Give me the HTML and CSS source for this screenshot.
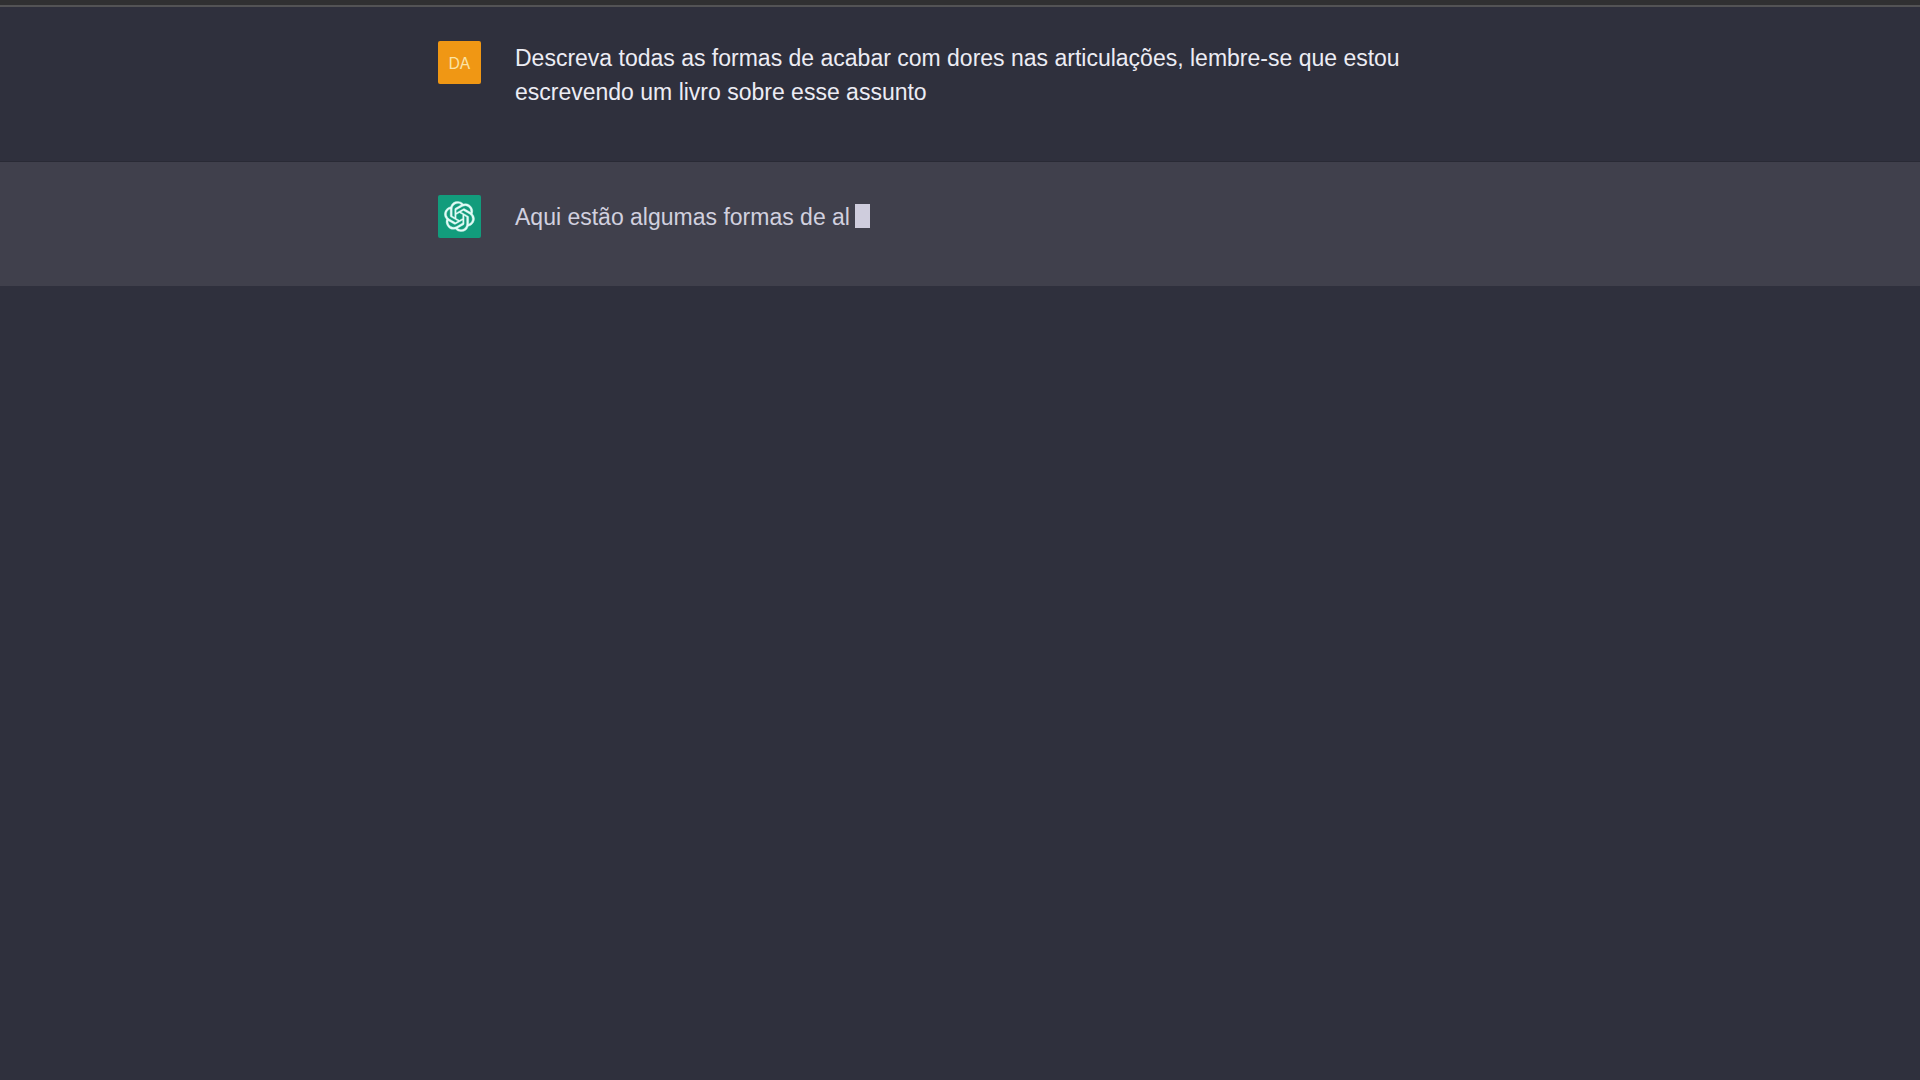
FILE: index.html
```html
<!DOCTYPE html>
<html lang="pt-BR">
<head>
  <meta charset="UTF-8" />
  <meta name="viewport" content="width=device-width, initial-scale=1.0"/>
  <title>Dores nas articulações</title>
  <link rel="stylesheet" href="styles.css">
</head>
<body>

  <header class="top-bar"></header>

  <main class="chat">

    <!-- User -->
    <div class="message user">
      <div class="message-inner">
        <div class="avatar avatar-user">DA</div>
        <p class="text">Descreva todas as formas de acabar com dores nas articulações, lembre-se que estou escrevendo um livro sobre esse assunto</p>
      </div>
    </div>

    <!-- Assistant -->
    <div class="message assistant">
      <div class="message-inner">
        <div class="avatar avatar-bot">
          <svg class="logo" viewBox="0 0 41 41" fill="none" role="img" aria-label="ChatGPT">
            <path d="M37.532 16.87a9.963 9.963 0 0 0-.856-8.184 10.078 10.078 0 0 0-10.855-4.835A9.964 9.964 0 0 0 18.306.5a10.079 10.079 0 0 0-9.614 6.977 9.967 9.967 0 0 0-6.664 4.834 10.08 10.08 0 0 0 1.24 11.817 9.965 9.965 0 0 0 .856 8.185 10.079 10.079 0 0 0 10.855 4.835 9.965 9.965 0 0 0 7.516 3.35 10.078 10.078 0 0 0 9.617-6.981 9.967 9.967 0 0 0 6.663-4.834 10.079 10.079 0 0 0-1.243-11.813ZM22.498 37.886a7.474 7.474 0 0 1-4.799-1.735c.061-.033.168-.091.237-.134l7.964-4.6a1.294 1.294 0 0 0 .655-1.134V19.054l3.366 1.944a.12.12 0 0 1 .066.092v9.299a7.505 7.505 0 0 1-7.49 7.496ZM6.392 31.006a7.471 7.471 0 0 1-.894-5.023c.06.036.162.099.237.141l7.964 4.6a1.297 1.297 0 0 0 1.308 0l9.724-5.614v3.888a.12.12 0 0 1-.048.103l-8.051 4.649a7.504 7.504 0 0 1-10.24-2.744ZM4.297 13.62A7.469 7.469 0 0 1 8.2 10.333c0 .068-.004.19-.004.274v9.201a1.294 1.294 0 0 0 .654 1.132l9.723 5.614-3.366 1.944a.12.12 0 0 1-.114.01L7.04 23.856a7.504 7.504 0 0 1-2.743-10.237Zm27.658 6.437-9.724-5.615 3.367-1.943a.121.121 0 0 1 .113-.01l8.052 4.648a7.498 7.498 0 0 1-1.158 13.528v-9.476a1.293 1.293 0 0 0-.65-1.132Zm3.35-5.043c-.059-.037-.162-.099-.236-.141l-7.965-4.6a1.298 1.298 0 0 0-1.308 0l-9.723 5.614v-3.888a.12.12 0 0 1 .048-.103l8.05-4.645a7.497 7.497 0 0 1 11.135 7.763Zm-21.063 6.929-3.367-1.944a.12.12 0 0 1-.065-.092v-9.299a7.497 7.497 0 0 1 12.293-5.756 6.94 6.94 0 0 0-.236.134l-7.965 4.6a1.294 1.294 0 0 0-.654 1.132l-.006 11.225Zm1.829-3.943 4.33-2.501 4.332 2.5v5l-4.331 2.5-4.331-2.5V18Z" fill="currentColor" stroke="currentColor" stroke-width=".5"/>
          </svg>
        </div>
        <p class="text">Aqui estão algumas formas de al<span class="cursor"></span></p>
      </div>
    </div>

  </main>

</body>
</html>
```
FILE: styles.css
```css
* {
  box-sizing: border-box;
}

body {
  margin: 0;
  min-height: 100vh;
  background: #2f303d;
  color: #ececf4;
  font-family: 'Liberation Sans', Arial, sans-serif;
}

.top-bar {
  height: 7px;
  background: #303032;
  border-bottom: 2px solid #535355;
}

.message {
  padding: 33px 24px 48px;
}

.message-inner {
  display: flex;
  align-items: center;
  gap: 34px;
  max-width: 1044px;
  margin: 0 auto;
}

.user {
  padding-top: 34px;
  padding-bottom: 52px;
  border-bottom: 1px solid #292a35;
}

.user .message-inner {
  align-items: flex-start;
}

.assistant {
  background: #40404c;
  color: #d1d0df;
}

.avatar {
  display: flex;
  flex-shrink: 0;
  align-items: center;
  justify-content: center;
  width: 43px;
  height: 43px;
  border-radius: 2px;
}

.avatar-user {
  background: #f09714;
  color: #fbe3a4;
  font-family: Inter, 'Liberation Sans', sans-serif;
  font-size: 16px;
  line-height: 20px;
}

.avatar-bot {
  background: #129c7c;
  color: #e2fbf6;
}

.logo {
  width: 31px;
  height: 31px;
}

.text {
  margin: 0;
  font-size: 23px;
  line-height: 34px;
}

.cursor {
  display: inline-block;
  width: 15px;
  height: 24px;
  margin-left: 5px;
  background: #cfcddd;
  vertical-align: -3px;
}
```
